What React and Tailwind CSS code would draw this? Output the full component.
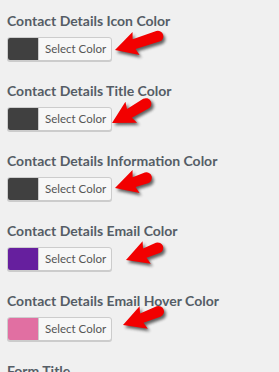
import React from "react";

const items = [
  { title: "Contact Details Icon Color", color: "bg-[#404040]", arrow: { x: 115, y: 50, a: -17, l: 50 } },
  { title: "Contact Details Title Color", color: "bg-[#404040]", arrow: { x: 112, y: 123, a: -29, l: 44 } },
  { title: "Contact Details Information Color", color: "bg-[#404040]", arrow: { x: 115, y: 188, a: -17, l: 38 } },
  { title: "Contact Details Email Color", color: "bg-[#661f9e]", arrow: { x: 126, y: 260, a: -20, l: 39 } },
  { title: "Contact Details Email Hover Color", color: "bg-[#e16fa2]", arrow: { x: 123, y: 325, a: -20, l: 43 } },
];

function Arrow({ x, y, a, l }) {
  const d = `M0 0 L22 -12 L20 -5 L${l - 5} -6 A5.5 5.5 0 0 1 ${l - 5} 5 L20 5 L22 12 Z`;
  return (
    <g transform={`translate(${x} ${y}) rotate(${a})`}>
      <path d={d} fill="#000" opacity="0.6" transform="translate(1 3)" filter="url(#blur)" />
      <path d={d} fill="#f20000" />
    </g>
  );
}

export default function App() {
  return (
    <div
      className="relative w-[279px] h-[372px] overflow-hidden bg-[#f0f0f0] pl-[7px] pt-[11px]"
      style={{ fontFamily: 'Lato, "Open Sans", Arial, sans-serif' }}
    >
      {items.map((it) => (
        <div key={it.title} className="mb-[20px]">
          <div className="h-5 leading-5 text-[14px] font-bold text-[#555d66] whitespace-nowrap">{it.title}</div>
          <div className="mt-[6px] flex w-fit h-[24px] items-stretch rounded-[3px] border border-[#cccccc] bg-[#f7f7f7] shadow-[0_1px_0_#cccccc] overflow-hidden">
            <div className={`w-[30px] ${it.color}`}></div>
            <div className="flex items-center pl-[6px] pr-[5px] text-[11.5px] leading-none text-[#555555] border-l border-[#cccccc]">Select Color</div>
          </div>
        </div>
      ))}
      <div className="h-5 leading-5 text-[14px] font-bold text-[#555d66]">Form Title</div>
      <svg className="absolute left-0 top-0 pointer-events-none" width="279" height="372">
        <defs>
          <filter id="blur" x="-30%" y="-60%" width="160%" height="220%">
            <feGaussianBlur stdDeviation="1.5" />
          </filter>
        </defs>
        {items.map((it) => (
          <Arrow key={it.title} {...it.arrow} />
        ))}
      </svg>
    </div>
  );
}
